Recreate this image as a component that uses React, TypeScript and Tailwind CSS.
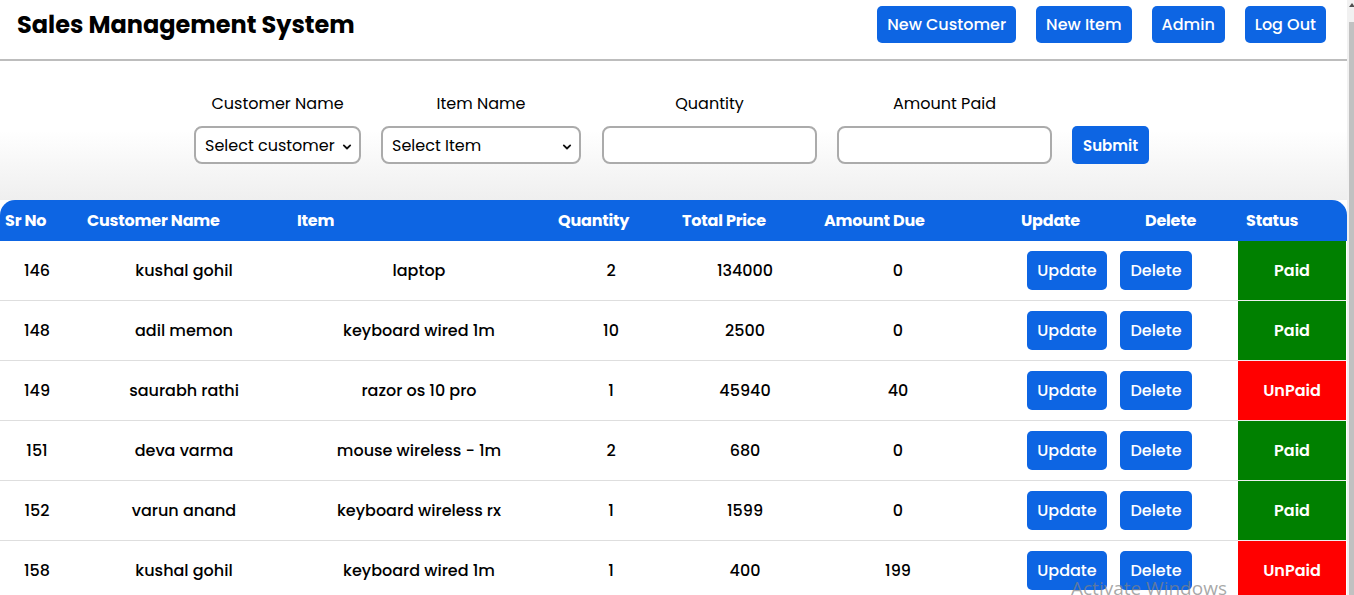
import React from "react";

const rows = [
  { id: 146, name: "kushal gohil", item: "laptop", qty: 2, total: 134000, due: 0, paid: true },
  { id: 148, name: "adil memon", item: "keyboard wired 1m", qty: 10, total: 2500, due: 0, paid: true },
  { id: 149, name: "saurabh rathi", item: "razor os 10 pro", qty: 1, total: 45940, due: 40, paid: false },
  { id: 151, name: "deva varma", item: "mouse wireless - 1m", qty: 2, total: 680, due: 0, paid: true },
  { id: 152, name: "varun anand", item: "keyboard wireless rx", qty: 1, total: 1599, due: 0, paid: true },
  { id: 158, name: "kushal gohil", item: "keyboard wired 1m", qty: 1, total: 400, due: 199, paid: false },
];

const font = { fontFamily: "Poppins, Inter, 'Noto Sans', sans-serif" };

function Chevron() {
  return (
    <svg width="10" height="10" viewBox="0 0 10 10" className="absolute right-[7px] top-[14px]">
      <path d="M1.8 3.4 L5 6.5 L8.2 3.4" fill="none" stroke="#111" strokeWidth="1.8" strokeLinecap="round" strokeLinejoin="round" />
    </svg>
  );
}

export default function App() {
  const cols = "grid grid-cols-[74px_220px_250px_134px_134px_172px_129px_125px_108px]";
  return (
    <div className="relative flex h-[595px] w-[1354px] overflow-hidden bg-white text-black" style={font}>
      <div className="w-[1347px] shrink-0">
        {/* header */}
        <div className="flex h-[61px] items-start justify-between border-b-2 border-[#bdbdbd] pl-[17px] pr-[21px]">
          <h1 className="mt-[9px] text-[24px] font-bold leading-[32px]">Sales Management System</h1>
          <div className="mt-[6px] flex gap-[20px]">
            {["New Customer", "New Item", "Admin", "Log Out"].map((t) => (
              <button key={t} className="h-[37px] rounded-[5px] bg-[#0d65e3] px-[10px] text-[16px] font-medium text-white">
                {t}
              </button>
            ))}
          </div>
        </div>

        {/* form */}
        <div className="flex h-[139px] justify-center gap-[20px] bg-gradient-to-b from-white from-50% to-[#efefef] pr-[4px] pt-[31px]">
          <div className="flex w-[167px] flex-col items-center">
            <label className="text-[16px] leading-[24px]">Customer Name</label>
            <div className="relative mt-[10px] h-[38px] w-full rounded-[8px] border-2 border-[#ababab] bg-white">
              <span className="absolute left-[9px] top-[6px] whitespace-nowrap text-[16px] leading-[24px]">Select customer</span>
              <Chevron />
            </div>
          </div>
          <div className="flex w-[200px] flex-col items-center">
            <label className="text-[16px] leading-[24px]">Item Name</label>
            <div className="relative mt-[10px] h-[38px] w-full rounded-[8px] border-2 border-[#ababab] bg-white">
              <span className="absolute left-[9px] top-[6px] text-[16px] leading-[24px]">Select Item</span>
              <Chevron />
            </div>
          </div>
          <div className="ml-[1px] flex w-[215px] flex-col items-center">
            <label className="text-[16px] leading-[24px]">Quantity</label>
            <div className="mt-[10px] h-[38px] w-full rounded-[8px] border-2 border-[#ababab] bg-white" />
          </div>
          <div className="flex w-[215px] flex-col items-center">
            <label className="text-[16px] leading-[24px]">Amount Paid</label>
            <div className="mt-[10px] h-[38px] w-full rounded-[8px] border-2 border-[#ababab] bg-white" />
          </div>
          <div className="flex flex-col pt-[34px]">
            <button className="h-[38px] w-[77px] rounded-[5px] bg-[#0d65e3] pt-[2px] text-[15px] font-semibold text-white">Submit</button>
          </div>
        </div>

        {/* table */}
        <div className="bg-white">
          <div className={`${cols} h-[41px] items-center rounded-t-[15px] bg-[#0d65e3] text-[16px] font-bold tracking-[-0.2px] text-white`}>
            <div className="pl-[5px]">Sr No</div>
            <div className="pl-[13px]">Customer Name</div>
            <div className="pl-[3px]">Item</div>
            <div className="pl-[14px]">Quantity</div>
            <div className="pl-[4px]">Total Price</div>
            <div className="pl-[12px]">Amount Due</div>
            <div className="pl-[37px]">Update</div>
            <div className="pl-[32px]">Delete</div>
            <div className="pl-[8px]">Status</div>
          </div>
          {rows.map((r) => (
            <div key={r.id} className={`${cols} h-[60px] text-[16px] font-medium`}>
              <div className="flex items-center justify-center border-b border-[#dedede]">{r.id}</div>
              <div className="flex items-center justify-center border-b border-[#dedede]">{r.name}</div>
              <div className="flex items-center justify-center border-b border-[#dedede]">{r.item}</div>
              <div className="flex items-center justify-center border-b border-[#dedede]">{r.qty}</div>
              <div className="flex items-center justify-center border-b border-[#dedede]">{r.total}</div>
              <div className="flex items-center justify-center border-b border-[#dedede]">{r.due}</div>
              <div className="flex items-center border-b border-[#dedede] pl-[43px]">
                <button className="h-[39px] w-[80px] rounded-[5px] bg-[#0d65e3] text-[16px] font-medium text-white">Update</button>
              </div>
              <div className="flex items-center border-b border-[#dedede] pl-[7px]">
                <button className="h-[39px] w-[72px] rounded-[5px] bg-[#0d65e3] text-[16px] font-medium text-white">Delete</button>
              </div>
              <div
                className={`flex items-center justify-center border-b border-[#f0f0f0] text-[16px] font-semibold text-white ${
                  r.paid ? "bg-[#008000]" : "bg-[#ff0000]"
                }`}
              >
                {r.paid ? "Paid" : "UnPaid"}
              </div>
            </div>
          ))}
        </div>
      </div>

      {/* fake scrollbar */}
      <div className="relative w-[7px] shrink-0 bg-[#f1f1f1]">
        <div className="absolute left-[2px] top-[3px] h-0 w-0 border-x-[3px] border-b-[4px] border-x-transparent border-b-[#505050]" />
        <div className="absolute left-[2px] right-0 top-[22px] h-[600px] bg-[#c1c1c1]" />
      </div>

      {/* OS watermark */}
      <div
        className="pointer-events-none absolute left-[1071px] top-[576px] text-[19px] leading-[25px] text-[rgba(130,130,130,0.7)]"
        style={{ fontFamily: "'Open Sans', 'Noto Sans', sans-serif" }}
      >
        Activate Windows
      </div>
    </div>
  );
}
